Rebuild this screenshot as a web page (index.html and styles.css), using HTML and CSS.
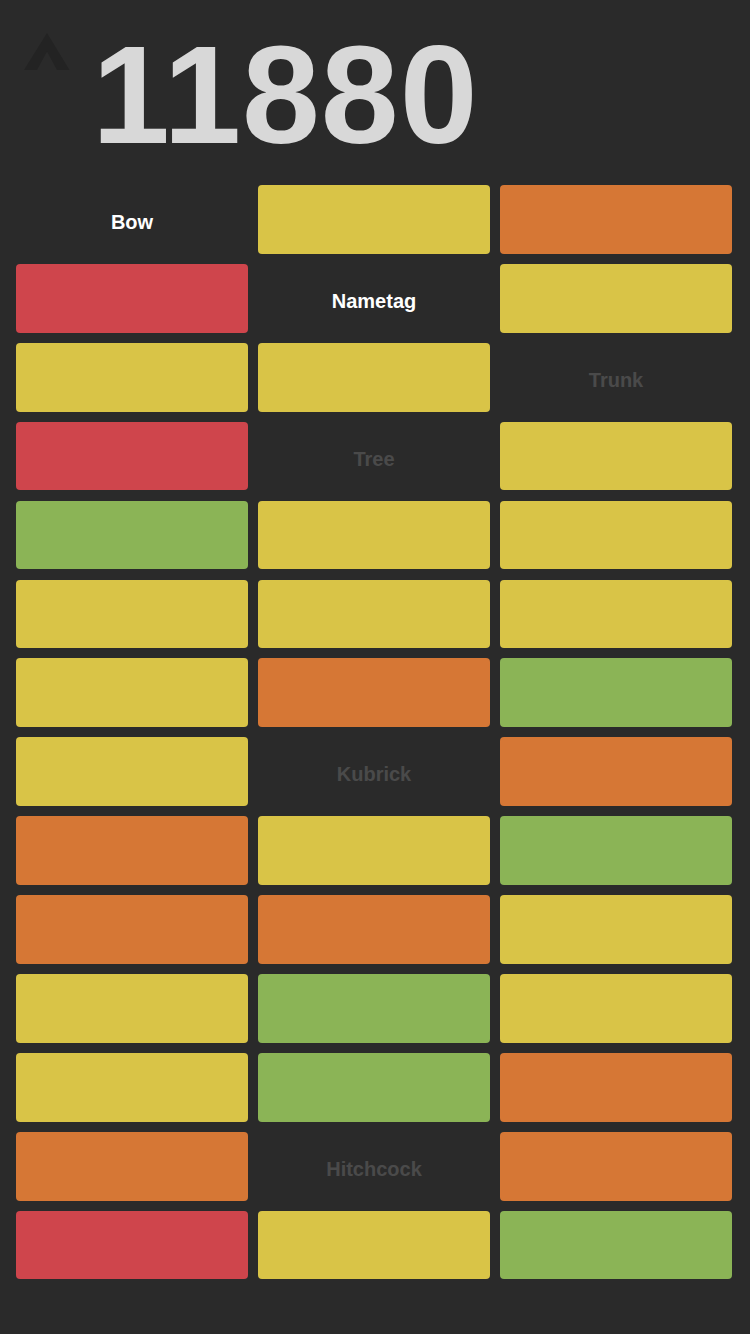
FILE: index.html
```html
<!DOCTYPE html>
<html>
<head>
<meta charset="utf-8">
<link rel="stylesheet" href="styles.css">
</head>
<body>
<div class="app">
  <header class="header">
    <svg class="caret" width="46" height="38" viewBox="0 0 46 38">
      <polygon points="23,0 45.5,37 33,37 23,18.5 13,37 0,37" fill="#232323"/>
    </svg>
    <div class="score">11880</div>
  </header>
  <main class="board">
    <div class="cell label bright">Bow</div>
    <div class="cell tile y"></div>
    <div class="cell tile o"></div>

    <div class="cell tile r"></div>
    <div class="cell label bright">Nametag</div>
    <div class="cell tile y"></div>

    <div class="cell tile y"></div>
    <div class="cell tile y"></div>
    <div class="cell label dim">Trunk</div>

    <div class="cell tile r"></div>
    <div class="cell label dim">Tree</div>
    <div class="cell tile y"></div>

    <div class="cell tile g"></div>
    <div class="cell tile y"></div>
    <div class="cell tile y"></div>

    <div class="cell tile y"></div>
    <div class="cell tile y"></div>
    <div class="cell tile y"></div>

    <div class="cell tile y"></div>
    <div class="cell tile o"></div>
    <div class="cell tile g"></div>

    <div class="cell tile y"></div>
    <div class="cell label dim">Kubrick</div>
    <div class="cell tile o"></div>

    <div class="cell tile o"></div>
    <div class="cell tile y"></div>
    <div class="cell tile g"></div>

    <div class="cell tile o"></div>
    <div class="cell tile o"></div>
    <div class="cell tile y"></div>

    <div class="cell tile y"></div>
    <div class="cell tile g"></div>
    <div class="cell tile y"></div>

    <div class="cell tile y"></div>
    <div class="cell tile g"></div>
    <div class="cell tile o"></div>

    <div class="cell tile o"></div>
    <div class="cell label dim">Hitchcock</div>
    <div class="cell tile o"></div>

    <div class="cell tile r"></div>
    <div class="cell tile y"></div>
    <div class="cell tile g"></div>
  </main>
</div>
</body>
</html>
```
FILE: styles.css
```css
html, body {
  margin: 0;
  padding: 0;
  background: #2a2a2a;
}
body {
  width: 750px;
  height: 1334px;
  overflow: hidden;
  font-family: "Liberation Sans", Arial, sans-serif;
}
.app {
  display: flex;
  flex-direction: column;
}
.header {
  display: flex;
  align-items: flex-start;
  height: 140px;
  padding: 25px 0 0 24px;
}
.caret {
  margin-top: 8px;
  flex: none;
}
.score {
  margin-left: 22px;
  font-size: 140px;
  line-height: 140px;
  font-weight: 700;
  color: #d8d8d8;
  letter-spacing: 1px;
}
.board {
  margin-top: 20px;
  padding: 0 18px 0 16px;
  display: grid;
  grid-template-columns: repeat(3, 232px);
  grid-auto-rows: 68.7px;
  column-gap: 10px;
  row-gap: 10.22px;
}
.tile {
  border-radius: 4px;
}
.y { background: #d9c447; }
.o { background: #d67735; }
.r { background: #cf454c; }
.g { background: #8bb456; }
.label {
  display: flex;
  align-items: center;
  justify-content: center;
  padding-top: 6px;
  box-sizing: border-box;
  font-size: 20px;
  font-weight: 700;
}
.bright { color: #ffffff; }
.dim { color: #4a4a4a; }
```
